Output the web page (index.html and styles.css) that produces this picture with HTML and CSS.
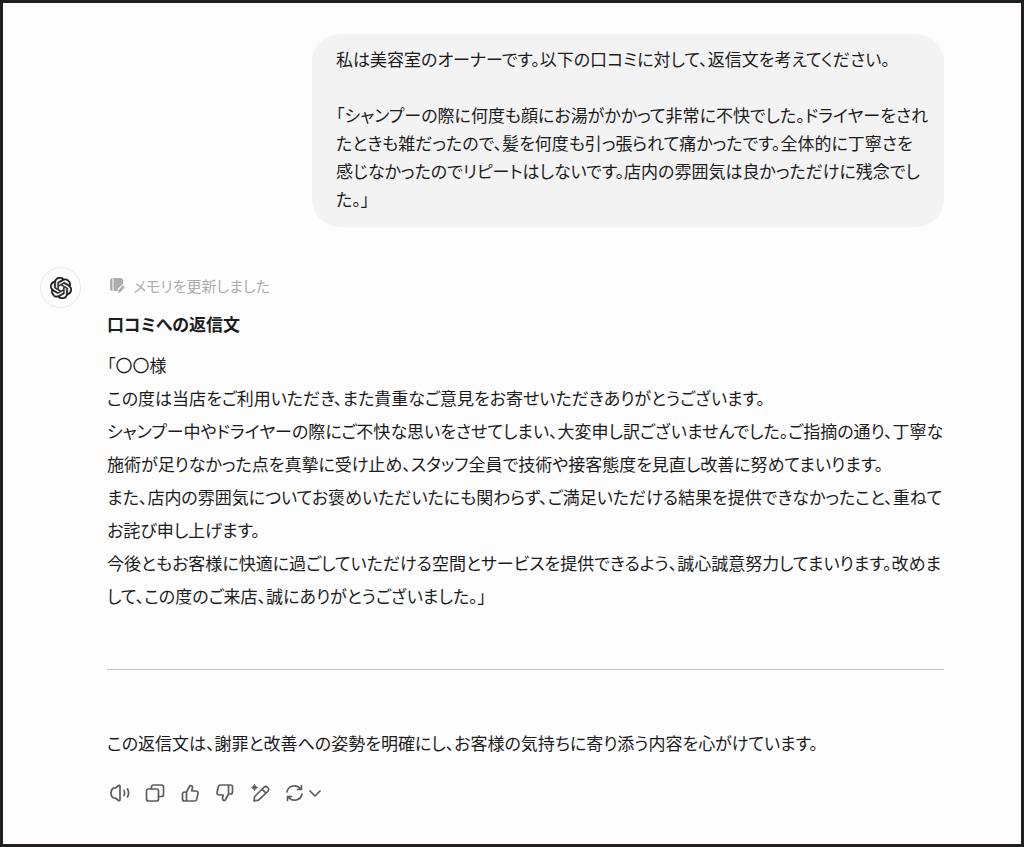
FILE: index.html
```html
<!DOCTYPE html>
<html lang="ja">
<head>
    <title>口コミへの返信文</title>
    <meta charset="utf-8">
    <meta name="viewport" content="width=device-width, initial-scale=1">
    <link rel="stylesheet" href="styles.css">
</head>
<body>
    <main class="chat">
        <div class="user-message">
            <p>私は美容室のオーナーです。以下の口コミに対して、返信文を考えてください。</p>
            <p>「シャンプーの際に何度も顔にお湯がかかって非常に不快でした。ドライヤーをされ<br>たときも雑だったので、髪を何度も引っ張られて痛かったです。全体的に丁寧さを<br>感じなかったのでリピートはしないです。店内の雰囲気は良かっただけに残念でし<br>た。」</p>
        </div>
        <div class="reply">
            <div class="avatar">
                <svg width="22" height="22" viewBox="0 0 24 24" fill="currentColor" stroke="currentColor" stroke-width=".5"><path d="M22.2819 9.8211a5.9847 5.9847 0 0 0-.5157-4.9108 6.0462 6.0462 0 0 0-6.5098-2.9A6.0651 6.0651 0 0 0 4.9807 4.1818a5.9847 5.9847 0 0 0-3.9977 2.9 6.0462 6.0462 0 0 0 .7427 7.0966 5.98 5.98 0 0 0 .511 4.9107 6.051 6.051 0 0 0 6.5146 2.9001A5.9847 5.9847 0 0 0 13.2599 24a6.0557 6.0557 0 0 0 5.7718-4.2058 5.9894 5.9894 0 0 0 3.9977-2.9001 6.0557 6.0557 0 0 0-.7475-7.0729zm-9.022 12.6081a4.4755 4.4755 0 0 1-2.8764-1.0408l.1419-.0804 4.7783-2.7582a.7948.7948 0 0 0 .3927-.6813v-6.7369l2.02 1.1686a.071.071 0 0 1 .038.052v5.5826a4.504 4.504 0 0 1-4.4945 4.4944zm-9.6607-4.1254a4.4708 4.4708 0 0 1-.5346-3.0137l.142.0852 4.783 2.7582a.7712.7712 0 0 0 .7806 0l5.8428-3.3685v2.3324a.0804.0804 0 0 1-.0332.0615L9.74 19.9502a4.4992 4.4992 0 0 1-6.1408-1.6464zM2.3408 7.8956a4.485 4.485 0 0 1 2.3655-1.9728V11.6a.7664.7664 0 0 0 .3879.6765l5.8144 3.3543-2.0201 1.1685a.0757.0757 0 0 1-.071 0l-4.8303-2.7865A4.504 4.504 0 0 1 2.3408 7.872zm16.5963 3.8558L13.1038 8.364 15.1192 7.2a.0757.0757 0 0 1 .071 0l4.8303 2.7913a4.4944 4.4944 0 0 1-.6765 8.1042v-5.6772a.79.79 0 0 0-.407-.667zm2.0107-3.0231l-.142-.0852-4.7735-2.7818a.7759.7759 0 0 0-.7854 0L9.409 9.2297V6.8974a.0662.0662 0 0 1 .0284-.0615l4.8303-2.7866a4.4992 4.4992 0 0 1 6.6802 4.66zM8.3065 12.863l-2.02-1.1638a.0804.0804 0 0 1-.038-.0567V6.0742a4.4992 4.4992 0 0 1 7.3757-3.4537l-.142.0805L8.704 5.459a.7948.7948 0 0 0-.3927.6813zm1.0976-2.3654l2.602-1.4998 2.6069 1.4998v2.9994l-2.5974 1.4997-2.6067-1.4997Z"/></svg>
            </div>
            <div class="reply-body">
                <div class="memory">
                    <svg width="16" height="18" viewBox="0 0 16 18" fill="currentColor"><path d="M1 4.500A2.500 2.500 0 0 1 3.500 2v13A2.500 2.500 0 0 1 1 12.500z"/><path d="M4.500 2h7A2.500 2.500 0 0 1 14 4.500V8L9 12.500 8.500 15h-4z"/><path d="M13 10a1.400 1.400 0 0 1 2 2L11.500 16l-2.500.8.6-2.700z"/></svg>
                    <span>メモリを更新しました</span>
                </div>
                <h1>口コミへの返信文</h1>
                <p>「〇〇様<br>この度は当店をご利用いただき、また貴重なご意見をお寄せいただきありがとうございます。<br>シャンプー中やドライヤーの際にご不快な思いをさせてしまい、大変申し訳ございませんでした。ご指摘の通り、丁寧な<br>施術が足りなかった点を真摯に受け止め、スタッフ全員で技術や接客態度を見直し改善に努めてまいります。<br>また、店内の雰囲気についてお褒めいただいたにも関わらず、ご満足いただける結果を提供できなかったこと、重ねて<br>お詫び申し上げます。<br>今後ともお客様に快適に過ごしていただける空間とサービスを提供できるよう、誠心誠意努力してまいります。改めま<br>して、この度のご来店、誠にありがとうございました。」</p>
                <hr>
                <p>この返信文は、謝罪と改善への姿勢を明確にし、お客様の気持ちに寄り添う内容を心がけています。</p>
                <div class="actions">
                    <button aria-label="読み上げる">
                        <svg width="20" height="20" viewBox="0 0 20 20"><path d="M10 3.200v13.600c0 1-.8 1.200-1.500.7L5.500 15H3.500Q1 13.500 1 10t2.500-5h2l3-2.500c.7-.5 1.500-.3 1.500.7z"/><path d="M14 7.500q1.200 2.500 0 5M17.500 6q2.200 4 0 8"/></svg>
                    </button>
                    <button aria-label="コピー">
                        <svg width="20" height="20" viewBox="0 0 20 20"><rect x="1.500" y="6" width="12" height="12" rx="2"/><path d="M6.500 6V4a2 2 0 0 1 2-2h8a2 2 0 0 1 2 2v7.500a2 2 0 0 1-2 2h-3"/></svg>
                    </button>
                    <button aria-label="良い回答">
                        <svg width="20" height="20" viewBox="0 0 20 20"><path d="M6.500 9L10 2.500c2-.2 2.800 1 2.400 2.800L11.800 8H16a2 2 0 0 1 2 2.500l-1.400 6a2 2 0 0 1-2 1.500H4.500a2 2 0 0 1-2-2v-5a2 2 0 0 1 2-2zM6.500 9v9"/></svg>
                    </button>
                    <button aria-label="悪い回答">
                        <svg width="20" height="20" viewBox="0 0 20 20"><path d="M13.500 11L10 17.500c-2 .2-2.800-1-2.400-2.800L8.200 12H4a2 2 0 0 1-2-2.500l1.400-6a2 2 0 0 1 2-1.500h10.100a2 2 0 0 1 2 2v5a2 2 0 0 1-2 2zM13.500 11V2"/></svg>
                    </button>
                    <button aria-label="編集">
                        <svg width="20" height="20" viewBox="0 0 20 20"><path d="M4 18l.7-4.500 9-9a2.700 2.700 0 0 1 4 4l-9.200 8.700zM12 6.200l4 4"/><path class="solid" d="M4.500 1.500l1 2 2 1-2 1-1 2-1-2-2-1 2-1z"/></svg>
                    </button>
                    <button aria-label="モデルを切り替える">
                        <svg width="20" height="20" viewBox="0 0 20 20"><path d="M2 9A7.500 7.500 0 0 1 15.500 6M16.500 2.500v4h-4M17 11A7.500 7.500 0 0 1 3.500 14M2.500 17.500v-4h4"/></svg>
                        <svg width="14" height="20" viewBox="0 0 14 20"><path d="M3 8l5 5 5-5"/></svg>
                    </button>
                </div>
            </div>
        </div>
    </main>
</body>
</html>
```
FILE: styles.css
```css
* { margin: 0; padding: 0; box-sizing: border-box; }
body { font-family: "Noto Sans CJK JP", sans-serif; font-feature-settings: "palt"; font-size: 17px; color: #1c1c1c; background: #fdfdfd; }
.chat { min-height: 100vh; padding: 31px 77px 31px 37px; border: 3px solid #231f20; }
.user-message { width: fit-content; margin-left: auto; padding: 11px 16px 14px 24px; border-radius: 28px; background: #f3f3f3; line-height: 28px; }
.user-message p + p { margin-top: 28px; }
.reply { display: flex; gap: 26px; margin-top: 40px; }
.avatar { display: flex; flex: none; align-items: center; justify-content: center; width: 41px; height: 41px; border: 1px solid #e8e8e8; border-radius: 50%; }
.reply-body { flex: 1; min-width: 0; line-height: 33px; white-space: nowrap; }
.memory { display: flex; align-items: center; gap: 8px; height: 36px; padding-left: 2px; font-size: 15px; color: #adadad; }
h1 { margin: 4px 0 8px; font-size: 17px; font-weight: bold; }
hr { margin: 57px 0 56px; border: none; border-top: 1px solid #c4c4c4; }
.actions { display: flex; gap: 15px; margin-top: 24px; padding-left: 3px; }
.actions button { display: flex; gap: 2px; border: none; background: none; color: #5d5d5d; cursor: pointer; }
.actions svg { fill: none; stroke: currentColor; stroke-width: 1.7; stroke-linecap: round; stroke-linejoin: round; }
.actions .solid { fill: currentColor; stroke-width: 1; }
```
